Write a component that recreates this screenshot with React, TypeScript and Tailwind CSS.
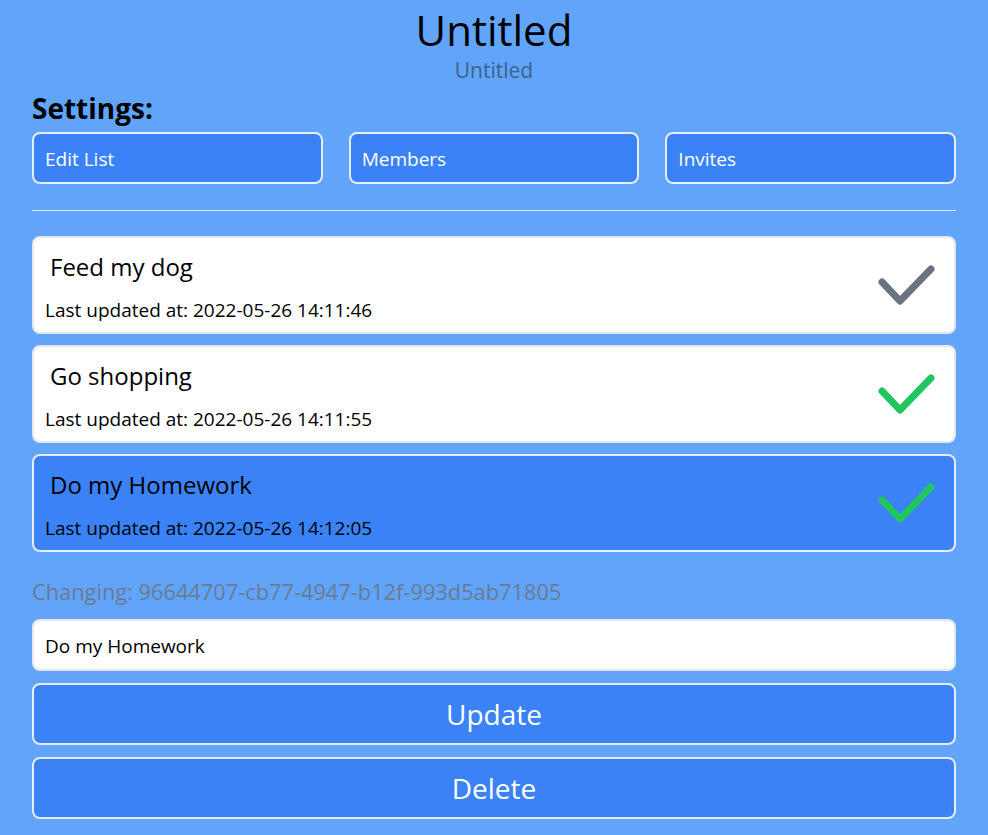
import React from "react";

const font = { fontFamily: '"Segoe UI", "Open Sans", "Noto Sans", sans-serif' };

function Check({ color }: { color: string }) {
  return (
    <svg width="60" height="44" viewBox="0 0 60 44" fill="none" className="shrink-0">
      <polyline
        points="4,19 22,38 53,6"
        stroke={color}
        strokeWidth="7"
        strokeLinecap="round"
        strokeLinejoin="round"
      />
    </svg>
  );
}

const items = [
  { title: "Feed my dog", time: "2022-05-26 14:11:46", done: false, active: false },
  { title: "Go shopping", time: "2022-05-26 14:11:55", done: true, active: false },
  { title: "Do my Homework", time: "2022-05-26 14:12:05", done: true, active: true },
];

export default function App() {
  return (
    <div className="min-h-[835px] w-full bg-[#60a5fa] px-8 text-black" style={font}>
      <div className="flex flex-col items-center pt-[6px]">
        <h1 className="text-[42px] leading-[48px]">Untitled</h1>
        <div className="mt-[2px] text-[21px] leading-7 text-[#41608d]">Untitled</div>
      </div>
      <div className="mt-[8px] text-[28px] font-bold leading-8">Settings:</div>
      <div className="mt-2 grid grid-cols-3 gap-[26px]">
        {["Edit List", "Members", "Invites"].map((l) => (
          <button
            key={l}
            className="flex h-[52px] items-center rounded-lg border-2 border-[#e5edfb] bg-[#3b82f6] pl-[11px] pt-[2px] text-left text-[19px] text-white"
          >
            {l}
          </button>
        ))}
      </div>
      <hr className="mt-[26px] border-t border-[#dbe7fb]" />
      <div className="mt-[25px] flex flex-col gap-[11px]">
        {items.map((it) => (
          <div
            key={it.title}
            className={`flex h-[98px] items-center justify-between rounded-lg border-2 pr-4 pl-[11px] ${
              it.active ? "border-[#e5edfb] bg-[#3b82f6]" : "border-[#e5e7eb] bg-white"
            }`}
          >
            <div className="flex flex-col pt-[5px]">
              <div className="ml-[5px] text-2xl leading-8">{it.title}</div>
              <div className="mt-[13px] text-[19px] leading-7">Last updated at: {it.time}</div>
            </div>
            <Check color={it.done ? "#22c55e" : "#6b7280"} />
          </div>
        ))}
      </div>
      <div className="mt-[26px] text-[21.8px] leading-7 text-[#6b7a93]">
        Changing: 96644707-cb77-4947-b12f-993d5ab71805
      </div>
      <input
        className="mt-[13px] block h-[52px] w-full rounded-lg border-2 border-[#e5e7eb] bg-white pl-[11px] pt-[2px] text-[19px] text-black outline-none"
        style={font}
        defaultValue="Do my Homework"
      />
      <button className="mt-3 flex h-[62px] w-full items-center justify-center rounded-lg border-2 border-[#e5edfb] bg-[#3b82f6] text-[28px] text-white">
        Update
      </button>
      <button className="mt-3 flex h-[62px] w-full items-center justify-center rounded-lg border-2 border-[#e5edfb] bg-[#3b82f6] text-[28px] text-white">
        Delete
      </button>
    </div>
  );
}
